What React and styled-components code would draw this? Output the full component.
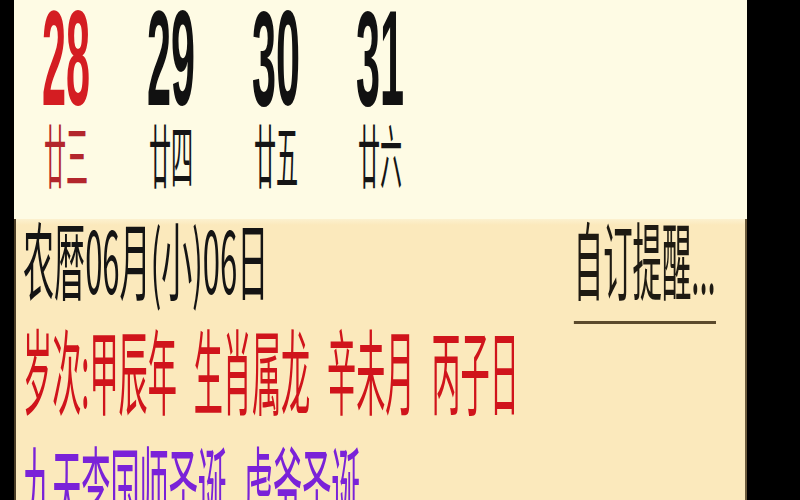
import React from 'react';
import styled, { createGlobalStyle } from 'styled-components';

const GlobalStyle = createGlobalStyle`
  html, body {
    margin: 0;
    padding: 0;
    height: 500px;
    overflow: hidden;
    background: #000;
  }
`;

// the phone capture is stretched 3x vertically, so the whole sheet is laid out
// at a third of the height and scaled back up
const Sheet = styled.div`
  width: 733px;
  height: 167px;
  margin-left: 14px;
  overflow: hidden;
  transform: scaleY(3);
  transform-origin: top left;
  font-family: "Noto Sans CJK SC", "Noto Sans", sans-serif;
`;

const WeekRow = styled.div`
  display: grid;
  grid-template-columns: repeat(7, 1fr);
  height: 73px;
  background: #fefbe4;
`;

const DayCell = styled.div`
  display: flex;
  flex-direction: column;
  align-items: center;
`;

const DayNumber = styled.div`
  font-family: "Liberation Sans", Arial, sans-serif;
  font-weight: 700;
  font-size: 45px;
  line-height: 40px;
  color: ${(p) => (p.$holiday ? '#d41d22' : '#111')};
  transform: scaleX(0.96);
`;

const LunarDay = styled.div`
  font-size: 23px;
  line-height: 23px;
  color: ${(p) => (p.$holiday ? '#b3262c' : '#151515')};
  transform: scaleX(0.96);
`;

const InfoPanel = styled.div`
  height: 94px;
  padding: 0 0 0 7px;
  background: linear-gradient(#fcf1cf 0px, #fbe9bc 2px);
  border-left: 2px solid #4a3d26;
  border-right: 2px solid #6b5a3c;
`;

const HeaderRow = styled.div`
  display: flex;
  justify-content: space-between;
  align-items: flex-start;
  padding-top: 0.5px;
`;

const LunarDate = styled.div`
  font-size: 28.5px;
  line-height: 24px;
  color: #141414;
  transform: scaleX(1.09);
  transform-origin: left;
`;

const ReminderLink = styled.div`
  margin-right: 29px;
  padding-bottom: 9px;
  font-size: 28.5px;
  line-height: 24px;
  color: #1e1a12;
  border-bottom: 1.7px solid #5b4a2c;
  transform: scaleX(1.03);
  transform-origin: right;
`;

const InfoLine = styled.div`
  margin-top: ${(p) => p.$gap}px;
  font-size: 31px;
  line-height: 26px;
  white-space: nowrap;
  word-spacing: 11px;
  color: ${(p) => p.$color};
  transform: scaleX(0.94);
  transform-origin: left;
`;

const days = [
  { day: 28, lunar: '廿三', holiday: true },
  { day: 29, lunar: '廿四' },
  { day: 30, lunar: '廿五' },
  { day: 31, lunar: '廿六' },
];

export default function App() {
  return (
    <>
      <GlobalStyle />
      <Sheet>
        <WeekRow>
          {days.map((d) => (
            <DayCell key={d.day}>
              <DayNumber $holiday={d.holiday}>{d.day}</DayNumber>
              <LunarDay $holiday={d.holiday}>{d.lunar}</LunarDay>
            </DayCell>
          ))}
        </WeekRow>
        <InfoPanel>
          <HeaderRow>
            <LunarDate>农暦06月(小)06日</LunarDate>
            <ReminderLink>自订提醒...</ReminderLink>
          </HeaderRow>
          <InfoLine $gap={2.5} $color="#d0141b">岁次:甲辰年 生肖属龙 辛未月 丙子日</InfoLine>
          <InfoLine $gap={13} $color="#7a22d8">九天李国师圣诞 虎爷圣诞</InfoLine>
        </InfoPanel>
      </Sheet>
    </>
  );
}
